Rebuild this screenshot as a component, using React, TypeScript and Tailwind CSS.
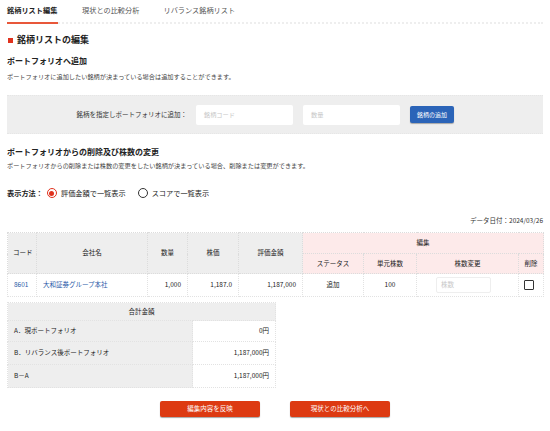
import React from "react";

const font = { fontFamily: '"Noto Sans CJK JP", "Noto Sans", sans-serif' };

function Radio({ checked, label }: { checked?: boolean; label: string }) {
    return (
        <label className="flex items-center gap-[4px]">
            <span
                className={`flex h-[10px] w-[10px] items-center justify-center rounded-full border ${
                    checked ? "border-[#e0321e]" : "border-[#333]"
                } bg-white`}
            >
                {checked && <span className="h-[5px] w-[5px] rounded-full bg-[#e0321e]" />}
            </span>
            <span>{label}</span>
        </label>
    );
}

export default function App() {
    const th = "border border-dotted border-[#dcdcdc] font-normal";
    const td = "border border-dotted border-[#e2e2e2] px-[6px]";

    return (
        <div className="h-[431px] w-[550px] overflow-hidden bg-white text-[#222]" style={font}>
            {/* Tabs */}
            <div className="flex h-[24px] items-end px-[7px]">
                <div className="flex w-full border-b-2 border-dotted border-[#eeeeee]">
                    <div className="-mb-[2px] w-[51px] border-b-2 border-[#e8573a] pb-[6px] text-[7.2px] font-bold">
                        銘柄リスト編集
                    </div>
                    <div className="ml-[24px] pb-[6px] text-[7.2px] text-[#555]">現状との比較分析</div>
                    <div className="ml-[24px] pb-[6px] text-[7.2px] text-[#555]">リバランス銘柄リスト</div>
                </div>
            </div>

            <div className="px-[7px]">
                {/* Heading */}
                <div className="mt-[9px] flex items-center gap-[4px]">
                    <span className="ml-[1px] h-[5px] w-[5px] bg-[#e0321e]" />
                    <h1 className="text-[9px] font-bold leading-[14px]">銘柄リストの編集</h1>
                </div>

                <h2 className="mt-[8px] text-[8px] font-bold leading-[12px]">ポートフォリオへ追加</h2>
                <p className="mt-[5px] text-[6.2px] leading-[9px] text-[#444]">
                    ポートフォリオに追加したい銘柄が決まっている場合は追加することができます。
                </p>

                {/* Add form */}
                <div className="mt-[14px] flex h-[39px] items-center border-y border-dotted border-[#e6e6e6] bg-[#eeeeee]">
                    <div className="w-[180px] text-right text-[6.5px] text-[#333]">銘柄を指定しポートフォリオに追加：</div>
                    <div className="ml-[9px] flex h-[20px] w-[97px] items-center rounded-[2px] bg-white px-[8px] text-[6.2px] text-[#c8c8c8]">
                        銘柄コード
                    </div>
                    <div className="ml-[10px] flex h-[20px] w-[97px] items-center rounded-[2px] bg-white px-[8px] text-[6.2px] text-[#c8c8c8]">
                        数量
                    </div>
                    <button className="ml-[10px] flex h-[17px] w-[44px] items-center justify-center rounded-[2px] bg-[#2b64b8] text-[6px] text-white shadow-[0_1px_1px_rgba(0,0,0,0.3)]">
                        銘柄の追加
                    </button>
                </div>

                <h2 className="mt-[12px] text-[8px] font-bold leading-[12px]">ポートフォリオからの削除及び株数の変更</h2>
                <p className="mt-[3px] text-[6.2px] leading-[9px] text-[#444]">
                    ポートフォリオからの削除または株数の変更をしたい銘柄が決まっている場合、削除または変更ができます。
                </p>

                {/* Display mode */}
                <div className="mt-[17px] flex items-center text-[7.2px] leading-[12px]">
                    <span className="font-bold">表示方法：</span>
                    <span className="ml-[4px]">
                        <Radio checked label="評価金額で一覧表示" />
                    </span>
                    <span className="ml-[12px]">
                        <Radio label="スコアで一覧表示" />
                    </span>
                </div>

                <div className="mt-[17px] text-right text-[6.5px] leading-[9px] text-[#333]">データ日付：2024/03/26</div>

                {/* Main table */}
                <table className="mt-[7px] w-full table-fixed border-collapse text-[6.5px]">
                    <colgroup>
                        <col className="w-[29px]" />
                        <col className="w-[111px]" />
                        <col className="w-[40px]" />
                        <col className="w-[51px]" />
                        <col className="w-[64px]" />
                        <col className="w-[61px]" />
                        <col className="w-[53px]" />
                        <col className="w-[102px]" />
                        <col className="w-[25px]" />
                    </colgroup>
                    <thead>
                        <tr className="h-[21px]">
                            <th rowSpan={2} className={`${th} bg-[#eeeeee] text-left pl-[5px]`}>コード</th>
                            <th rowSpan={2} className={`${th} bg-[#eeeeee]`}>会社名</th>
                            <th rowSpan={2} className={`${th} bg-[#eeeeee]`}>数量</th>
                            <th rowSpan={2} className={`${th} bg-[#eeeeee]`}>株価</th>
                            <th rowSpan={2} className={`${th} bg-[#eeeeee]`}>評価金額</th>
                            <th colSpan={4} className={`${th} bg-[#fdeaea]`}>編集</th>
                        </tr>
                        <tr className="h-[20px]">
                            <th className={`${th} bg-[#fdeaea]`}>ステータス</th>
                            <th className={`${th} bg-[#fdeaea]`}>単元株数</th>
                            <th className={`${th} bg-[#fdeaea]`}>株数変更</th>
                            <th className={`${th} bg-[#fdeaea]`}>削除</th>
                        </tr>
                    </thead>
                    <tbody>
                        <tr className="h-[23px]">
                            <td className={`${td} text-[#2b5aa8]`}>8601</td>
                            <td className={`${td} text-[#2b5aa8]`}>大和証券グループ本社</td>
                            <td className={`${td} text-right`}>1,000</td>
                            <td className={`${td} text-right`}>1,187.0</td>
                            <td className={`${td} text-right`}>1,187,000</td>
                            <td className={`${td} text-center`}>追加</td>
                            <td className={`${td} text-center`}>100</td>
                            <td className="border border-dotted border-[#e2e2e2]">
                                <div className="ml-[19px] flex h-[16px] w-[55px] items-center rounded-[2px] border border-[#eeeeee] px-[4px] text-[#c8c8c8]">
                                    株数
                                </div>
                            </td>
                            <td className="border border-dotted border-[#e2e2e2]">
                                <div className="ml-[5px] h-[10px] w-[10px] rounded-[1px] border border-[#333]" />
                            </td>
                        </tr>
                    </tbody>
                </table>

                {/* Totals */}
                <table className="mt-[5px] w-[268px] table-fixed border-collapse text-[6.5px]">
                    <colgroup>
                        <col className="w-[185px]" />
                        <col className="w-[83px]" />
                    </colgroup>
                    <tbody>
                        <tr className="h-[18px]">
                            <td colSpan={2} className={`${td} bg-[#eeeeee] text-center`}>合計金額</td>
                        </tr>
                        <tr className="h-[21px]">
                            <td className={`${td} bg-[#eeeeee]`}>A．現ポートフォリオ</td>
                            <td className={`${td} bg-white text-right`}>0円</td>
                        </tr>
                        <tr className="h-[23px]">
                            <td className={`${td} bg-[#eeeeee]`}>B．リバランス後ポートフォリオ</td>
                            <td className={`${td} bg-white text-right`}>1,187,000円</td>
                        </tr>
                        <tr className="h-[23px]">
                            <td className={`${td} bg-[#eeeeee]`}>B－A</td>
                            <td className={`${td} bg-white text-right`}>1,187,000円</td>
                        </tr>
                    </tbody>
                </table>

                {/* Action buttons */}
                <div className="mt-[13px] flex justify-center gap-[30px]">
                    <button className="flex h-[16px] w-[100px] items-center justify-center rounded-[2px] bg-[#dd3a12] text-[6.5px] text-white shadow-[0_1px_1px_rgba(0,0,0,0.35)]">
                        編集内容を反映
                    </button>
                    <button className="flex h-[16px] w-[100px] items-center justify-center rounded-[2px] bg-[#dd3a12] text-[6.5px] text-white shadow-[0_1px_1px_rgba(0,0,0,0.35)]">
                        現状との比較分析へ
                    </button>
                </div>
            </div>
        </div>
    );
}
